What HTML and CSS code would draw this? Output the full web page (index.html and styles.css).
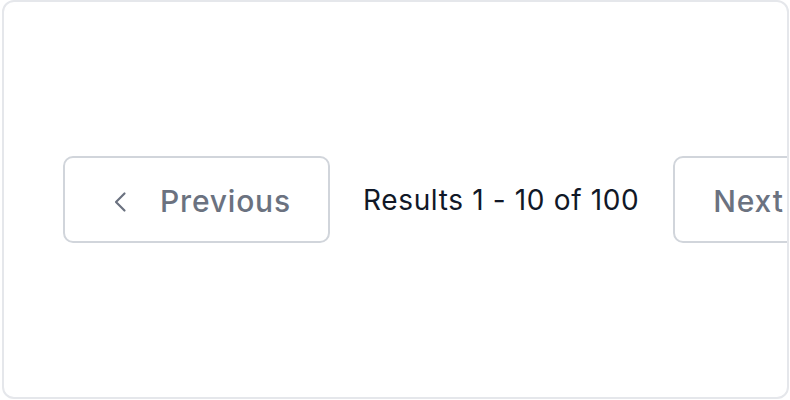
FILE: index.html
```html
<!DOCTYPE html>
<html>
<head>
<meta charset="utf-8">
<link rel="stylesheet" href="styles.css">
</head>
<body>
<div class="card">
  <nav class="pager">
    <button class="btn btn-prev">
      <svg class="chev" width="24" height="24" viewBox="0 0 24 24" fill="none" stroke="currentColor" stroke-width="2.2" stroke-linecap="round" stroke-linejoin="round"><path d="M14.5 3.5 L6 12 L14.5 20.5"/></svg>
      <span>Previous</span>
    </button>
    <span class="results">Results 1 - 10 of 100</span>
    <button class="btn btn-next"><span>Next</span></button>
  </nav>
</div>
</body>
</html>
```
FILE: styles.css
```css
html, body {
  margin: 0;
  padding: 0;
  background: #ffffff;
}
body {
  font-family: Inter, "Noto Sans", sans-serif;
}
.card {
  box-sizing: border-box;
  margin-left: 2px;
  width: 787px;
  height: 399px;
  border: 2px solid #e5e7eb;
  border-radius: 12px;
  overflow: hidden;
  display: flex;
  align-items: center;
  padding-left: 59px;
}
.pager {
  display: flex;
  align-items: center;
  gap: 33px;
  flex-shrink: 0;
}
.btn {
  box-sizing: border-box;
  height: 87px;
  border: 2px solid #d1d5db;
  border-radius: 10px;
  background: #fff;
  color: #6b7280;
  font-family: inherit;
  font-size: 30px;
  font-weight: 450;
  letter-spacing: 0.8px;
  display: flex;
  align-items: center;
  padding: 0 40px;
  flex-shrink: 0;
}
.btn span {
  position: relative;
  top: 1px;
  white-space: nowrap;
}
.btn-prev {
  width: 267px;
  padding-left: 45px;
  gap: 26px;
}
.btn-next {
  margin-left: 1px;
  padding-left: 38px;
}
.chev {
  width: 24px;
  height: 24px;
  flex-shrink: 0;
  position: relative;
  top: 2px;
}
.results {
  font-size: 28px;
  letter-spacing: 0.65px;
  color: #111827;
  white-space: nowrap;
}
```
